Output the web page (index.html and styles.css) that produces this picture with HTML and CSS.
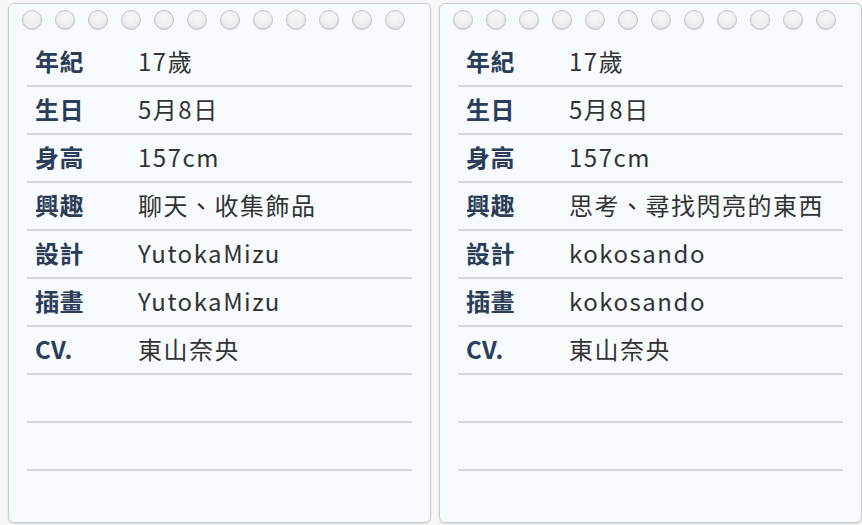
FILE: index.html
```html
<!DOCTYPE html>
<html lang="zh-Hant">
<head>
<meta charset="utf-8">
<link rel="stylesheet" href="styles.css">
</head>
<body>
<div class="cards">
  <section class="card">
    <div class="holes"><i></i><i></i><i></i><i></i><i></i><i></i><i></i><i></i><i></i><i></i><i></i><i></i></div>
    <div class="rows">
      <div class="row"><span class="label">年紀</span><span class="value">17歲</span></div>
      <div class="row"><span class="label">生日</span><span class="value">5月8日</span></div>
      <div class="row"><span class="label">身高</span><span class="value">157cm</span></div>
      <div class="row"><span class="label">興趣</span><span class="value">聊天、收集飾品</span></div>
      <div class="row"><span class="label">設計</span><span class="value">YutokaMizu</span></div>
      <div class="row"><span class="label">插畫</span><span class="value">YutokaMizu</span></div>
      <div class="row"><span class="label">CV.</span><span class="value">東山奈央</span></div>
      <div class="row"></div>
      <div class="row"></div>
    </div>
  </section>
  <section class="card">
    <div class="holes"><i></i><i></i><i></i><i></i><i></i><i></i><i></i><i></i><i></i><i></i><i></i><i></i></div>
    <div class="rows">
      <div class="row"><span class="label">年紀</span><span class="value">17歲</span></div>
      <div class="row"><span class="label">生日</span><span class="value">5月8日</span></div>
      <div class="row"><span class="label">身高</span><span class="value">157cm</span></div>
      <div class="row"><span class="label">興趣</span><span class="value">思考、尋找閃亮的東西</span></div>
      <div class="row"><span class="label">設計</span><span class="value">kokosando</span></div>
      <div class="row"><span class="label">插畫</span><span class="value">kokosando</span></div>
      <div class="row"><span class="label">CV.</span><span class="value">東山奈央</span></div>
      <div class="row"></div>
      <div class="row"></div>
    </div>
  </section>
</div>
</body>
</html>
```

FILE: styles.css
```css
html, body {
  margin: 0;
  padding: 0;
}
body {
  background: #f7f7f7;
  width: 862px;
  height: 525px;
  overflow: hidden;
  font-family: "Noto Sans CJK TC", "Noto Sans", sans-serif;
}
.cards {
  display: flex;
  gap: 8px;
  padding: 3px 0 0 8px;
}
.card {
  flex: 0 0 423px;
  width: 423px;
  height: 520px;
  box-sizing: border-box;
  background: #f7fbfd;
  border: 1px solid #c9cdd1;
  border-radius: 6px;
  box-shadow: 0 1px 2px rgba(0,0,0,0.12);
}
.holes {
  display: flex;
  gap: 13px;
  padding: 6px 0 0 13px;
  height: 20px;
}
.holes i {
  display: block;
  width: 20px;
  height: 20px;
  box-sizing: border-box;
  border-radius: 50%;
  border: 1px solid #c2c4c6;
  background: radial-gradient(circle at 50% 35%, #f6f6f6 0%, #eeeeee 60%, #e2e2e2 100%);
  box-shadow: inset 0 -1px 1px rgba(0,0,0,0.08);
}
.rows {
  padding: 9px 18px 0 18px;
}
.row {
  display: flex;
  align-items: center;
  height: 43px;
  padding-bottom: 3px;
  border-bottom: 2px solid #d4d8db;
}
.label {
  width: 103px;
  padding-left: 8px;
  font-size: 24px;
  letter-spacing: 0.5px;
  font-weight: 700;
  color: #2b3d58;
}
.value {
  font-size: 24px;
  letter-spacing: 1.5px;
  color: #333333;
}
```
